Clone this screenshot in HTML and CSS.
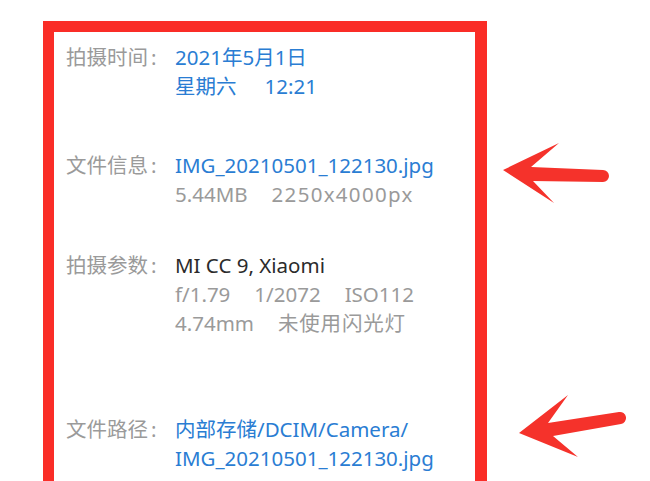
FILE: index.html
```html
<!DOCTYPE html>
<html lang="zh-CN">
<head>
<meta charset="utf-8">
<title>详细信息</title>
<link rel="stylesheet" href="styles.css">
</head>
<body>
<div class="page">
  <div class="frame">
    <div class="row r1">
      <div class="label">拍摄时间<span class="colon">:</span></div>
      <div class="val blue">
        <div class="line">2021年5月1日</div>
        <div class="line segs wide"><span>星期六</span><span>12:21</span></div>
      </div>
    </div>
    <div class="row r2">
      <div class="label">文件信息<span class="colon">:</span></div>
      <div class="val">
        <div class="line blue">IMG_20210501_122130.jpg</div>
        <div class="line segs gray"><span>5.44MB</span><span class="spaced">2250x4000px</span></div>
      </div>
    </div>
    <div class="row r3">
      <div class="label">拍摄参数<span class="colon">:</span></div>
      <div class="val">
        <div class="line dark">MI CC 9, Xiaomi</div>
        <div class="line segs gray"><span>f/1.79</span><span>1/2072</span><span>ISO112</span></div>
        <div class="line segs gray"><span>4.74mm</span><span class="cjk">未使用闪光灯</span></div>
      </div>
    </div>
    <div class="row r4">
      <div class="label">文件路径<span class="colon">:</span></div>
      <div class="val blue">
        <div class="line">内部存储/DCIM/Camera/</div>
        <div class="line">IMG_20210501_122130.jpg</div>
      </div>
    </div>
  </div>
  <svg class="arrows" width="650" height="481" viewBox="0 0 650 481" aria-hidden="true">
    <path d="M503,170 L559,143 L531,167 L603,170 A6,6 0 0 1 603,182 L533,181 L554,203 Z" />
    <path d="M519,433 L568,395 L548,423 L619,412 A6,6 0 0 1 621,424 L553,436 L578,457 Z" />
  </svg>
</div>
</body>
</html>
```
FILE: styles.css
```css
html, body {
  margin: 0;
  padding: 0;
  width: 650px;
  height: 481px;
  overflow: hidden;
  background: #ffffff;
}

.page {
  position: relative;
  width: 650px;
  height: 481px;
  overflow: hidden;
  padding: 21px 0 0 43px;
  box-sizing: border-box;
  font-family: "Noto Sans", "Noto Sans CJK SC", sans-serif;
  font-size: 20.5px;
  line-height: 29px;
}

.frame {
  width: 444px;
  height: 460px;
  box-sizing: border-box;
  border: 11px solid #fa2d27;
  border-right-width: 12px;
  border-bottom: none;
  padding: 10.5px 0 0 12px;
}

.row {
  display: grid;
  grid-template-columns: 109px 1fr;
}

.r2 { margin-top: 50px; }
.r3 { margin-top: 42px; }
.r4 { margin-top: 77px; }

.label {
  color: #9a9a9a;
  font-size: 20.5px;
}

.colon {
  margin-left: 3px;
}

.line {
  white-space: nowrap;
}

.segs {
  display: flex;
  gap: 24px;
}

.segs.wide {
  gap: 28px;
}

.spaced {
  letter-spacing: 1.3px;
}

.cjk {
  letter-spacing: 0.8px;
}

.blue { color: #2a7dd3; }
.gray { color: #9a9a9a; }
.dark { color: #2b2b2b; }

.arrows {
  position: absolute;
  left: 0;
  top: 0;
  fill: #f5322b;
}
```
